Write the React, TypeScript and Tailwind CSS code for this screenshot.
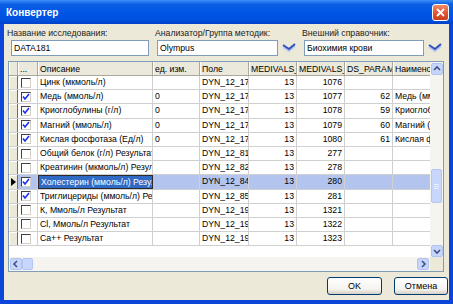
import React from "react";

type Row = {
  checked: boolean;
  desc: string;
  unit: string;
  field: string;
  m1: string;
  m2: string;
  ds: string;
  name: string;
  selected?: boolean;
};

const rows: Row[] = [
  { checked: false, desc: "Цинк (мкмоль/л)", unit: "", field: "DYN_12_177", m1: "13", m2: "1076", ds: "", name: "" },
  { checked: true, desc: "Медь (ммоль/л)", unit: "0", field: "DYN_12_177", m1: "13", m2: "1077", ds: "62", name: "Медь (ммоль/л)" },
  { checked: true, desc: "Криоглобулины (г/л)", unit: "0", field: "DYN_12_177", m1: "13", m2: "1078", ds: "59", name: "Криоглобулины" },
  { checked: true, desc: "Магний (ммоль/л)", unit: "0", field: "DYN_12_177", m1: "13", m2: "1079", ds: "60", name: "Магний (ммоль/л)" },
  { checked: true, desc: "Кислая фосфотаза (Ед/л)", unit: "0", field: "DYN_12_177", m1: "13", m2: "1080", ds: "61", name: "Кислая фосфотаза" },
  { checked: false, desc: "Общий белок (г/л) Результат", unit: "", field: "DYN_12_81", m1: "13", m2: "277", ds: "", name: "" },
  { checked: false, desc: "Креатинин (мкмоль/л) Результат", unit: "", field: "DYN_12_82", m1: "13", m2: "278", ds: "", name: "" },
  { checked: true, desc: "Холестерин (ммоль/л) Результат", unit: "", field: "DYN_12_84", m1: "13", m2: "280", ds: "", name: "", selected: true },
  { checked: true, desc: "Триглицериды (ммоль/л) Результат", unit: "", field: "DYN_12_85", m1: "13", m2: "281", ds: "", name: "" },
  { checked: false, desc: "К, Ммоль/л Результат", unit: "", field: "DYN_12_199", m1: "13", m2: "1321", ds: "", name: "" },
  { checked: false, desc: "Cl, Ммоль/л Результат", unit: "", field: "DYN_12_199", m1: "13", m2: "1322", ds: "", name: "" },
  { checked: false, desc: "Ca++ Результат", unit: "", field: "DYN_12_199", m1: "13", m2: "1323", ds: "", name: "" },
];

const DropIcon = () => (
  <svg width="14" height="10" viewBox="0 0 14 10" className="shrink-0">
    <polyline points="1,4 7,8 13,3" fill="none" stroke="#b8c8f0" strokeWidth="2" />
    <polyline points="1,2 7,6 13,1" fill="none" stroke="#2f52c0" strokeWidth="2" />
  </svg>
);

const CheckBox = ({ checked }: { checked: boolean }) => (
  <div className="w-[10px] h-[10px] bg-white border-t border-l border-[#404040] border-b border-r border-b-[#d4d0c8] border-r-[#d4d0c8] flex items-center justify-center">
    {checked && (
      <svg width="8" height="8" viewBox="0 0 8 8">
        <polyline points="1,3.5 3,6 7,1" fill="none" stroke="#1c2ff0" strokeWidth="1.6" />
      </svg>
    )}
  </div>
);

const Arrow = ({ dir }: { dir: "up" | "down" | "left" | "right" }) => {
  const pts = {
    up: "2,6 5,3 8,6",
    down: "2,4 5,7 8,4",
    left: "6,2 3,5 6,8",
    right: "4,2 7,5 4,8",
  }[dir];
  return (
    <div className="w-[12px] h-[12px] rounded-[2px] bg-[#c6d5fa] border border-[#b0c4f2] flex items-center justify-center">
      <svg width="10" height="10" viewBox="0 0 10 10">
        <polyline points={pts} fill="none" stroke="#3d5285" strokeWidth="1.6" />
      </svg>
    </div>
  );
};

const HeadCell = ({ w, children }: { w: string; children?: React.ReactNode }) => (
  <div className={`${w} shrink-0 h-full px-[2px] bg-[#ebe9db] border-r border-[#aca899] shadow-[inset_1px_0_0_#fff] overflow-hidden whitespace-nowrap leading-[14px]`}>
    {children}
  </div>
);

const Cell = ({ w, right, children, sel }: { w: string; right?: boolean; children?: React.ReactNode; sel?: boolean }) => (
  <div
    className={`${w} shrink-0 h-full px-[2px] border-r border-[#d0d0d0] overflow-hidden whitespace-nowrap leading-[13px] ${right ? "text-right" : ""} ${sel ? "bg-[#b3c5ef]" : ""}`}
  >
    {children}
  </div>
);

export default function App() {
  return (
    <div className="w-[453px] h-[304px] bg-[#0b45d9] flex flex-col font-['Liberation_Sans',Arial,sans-serif] text-[8.7px] text-black">
      {/* title bar */}
      <div className="h-[24px] shrink-0 flex items-center justify-between pl-[6px] pr-[4px] bg-[linear-gradient(to_bottom,#3d8ff8_0%,#0a5ee2_18%,#0055e5_55%,#0050dc_85%,#0040c6_100%)]">
        <span className="font-bold text-[10px] text-white">Конвертер</span>
        <div className="w-[17px] h-[17px] rounded-[3px] border border-white bg-[linear-gradient(to_bottom,#f08a66,#e0502c_60%,#c8401e)] flex items-center justify-center">
          <svg width="9" height="9" viewBox="0 0 9 9">
            <path d="M1 1 L8 8 M8 1 L1 8" stroke="#fff" strokeWidth="1.8" />
          </svg>
        </div>
      </div>

      {/* body */}
      <div className="flex-1 mx-[4px] mb-[4px] bg-[#ece9d8] flex flex-col">
        <div className="flex pt-[3px] pl-[3px]">
          <div className="w-[148px] flex flex-col">
            <span className="leading-[13px] text-[#222]">Название исследования:</span>
            <div className="ml-[4px] w-[138px] h-[16px] bg-white border border-[#7f9db9] px-[2px] leading-[14px]">DATA181</div>
          </div>
          <div className="w-[147px] flex flex-col">
            <span className="leading-[13px] text-[#222]">Анализатор/Группа методик:</span>
            <div className="flex items-center">
              <div className="ml-[2px] w-[121px] h-[16px] bg-white border border-[#7f9db9] px-[2px] leading-[14px]">Olympus</div>
              <div className="ml-[4px]">
                <DropIcon />
              </div>
            </div>
          </div>
          <div className="flex flex-col">
            <span className="leading-[13px] text-[#222]">Внешний справочник:</span>
            <div className="flex items-center">
              <div className="ml-[2px] w-[120px] h-[16px] bg-white border border-[#7f9db9] px-[2px] leading-[14px]">Биохимия крови</div>
              <div className="ml-[4px]">
                <DropIcon />
              </div>
            </div>
          </div>
        </div>

        {/* grid */}
        <div className="mt-[5px] ml-[4px] w-[436px] h-[211px] border border-[#7f9db9] bg-white flex flex-col">
          <div className="h-[195px] flex">
            <div className="w-[421px] overflow-hidden flex flex-col">
              <div className="h-[14px] flex border-b border-[#aca899] shrink-0">
                <HeadCell w="w-[9px]" />
                <HeadCell w="w-[20px]">...</HeadCell>
                <HeadCell w="w-[115px]">Описание</HeadCell>
                <HeadCell w="w-[47px]">ед. изм.</HeadCell>
                <HeadCell w="w-[49px]">Поле</HeadCell>
                <HeadCell w="w-[48px]">MEDIVALS_ID</HeadCell>
                <HeadCell w="w-[48px]">MEDIVALS_PARAM</HeadCell>
                <HeadCell w="w-[48px]">DS_PARAMS_ID</HeadCell>
                <HeadCell w="w-[60px]">Наименование</HeadCell>
              </div>
              {rows.map((r, i) => (
                <div key={i} className="h-[14.2px] flex border-b border-[#d0d0d0] shrink-0">
                  <div className="w-[9px] shrink-0 h-full bg-[#ece9d8] border-r border-[#716f64] shadow-[inset_1px_1px_0_#fff] flex items-center justify-center">
                    {r.selected && (
                      <svg width="5" height="8" viewBox="0 0 5 8">
                        <path d="M0 0 L5 4 L0 8 Z" fill="#000" />
                      </svg>
                    )}
                  </div>
                  <div className={`w-[20px] shrink-0 h-full border-r border-[#d0d0d0] flex items-center pl-[3px] ${r.selected ? "bg-[#b3c5ef]" : ""}`}>
                    <CheckBox checked={r.checked} />
                  </div>
                  <div
                    className={`w-[115px] shrink-0 h-full px-[2px] overflow-hidden whitespace-nowrap leading-[13px] ${
                      r.selected ? "bg-[#316ac5] text-white border border-[#2a2a2a]" : "border-r border-[#d0d0d0]"
                    }`}
                  >
                    {r.desc}
                  </div>
                  <Cell w="w-[47px]" sel={r.selected}>{r.unit}</Cell>
                  <Cell w="w-[49px]" sel={r.selected}>{r.field}</Cell>
                  <Cell w="w-[48px]" right sel={r.selected}>{r.m1}</Cell>
                  <Cell w="w-[48px]" right sel={r.selected}>{r.m2}</Cell>
                  <Cell w="w-[48px]" right sel={r.selected}>{r.ds}</Cell>
                  <Cell w="w-[60px]" sel={r.selected}>{r.name}</Cell>
                </div>
              ))}
            </div>
            {/* vertical scrollbar */}
            <div className="w-[13px] h-full bg-[#f5f4ef] flex flex-col items-center pt-[1px]">
              <Arrow dir="up" />
              <div className="flex-1 w-full flex flex-col items-center">
                <div className="mt-[94px] w-[11px] h-[34px] rounded-[2px] bg-[#c8d6fb] border border-[#b2c5f3] flex flex-col items-center justify-center gap-[1px]">
                  <div className="w-[5px] h-[1px] bg-[#e8eefd]" />
                  <div className="w-[5px] h-[1px] bg-[#e8eefd]" />
                  <div className="w-[5px] h-[1px] bg-[#e8eefd]" />
                </div>
              </div>
              <Arrow dir="down" />
            </div>
          </div>
          {/* horizontal scrollbar */}
          <div className="h-[14px] flex">
            <div className="w-[421px] h-full bg-[#f5f4ef] flex items-center pl-[1px] pr-[1px]">
              <Arrow dir="left" />
              <div className="flex-1 h-full flex items-center">
                <div className="w-[11px] h-[12px] rounded-[2px] bg-[#c8d6fb] border border-[#b2c5f3]" />
              </div>
              <Arrow dir="right" />
            </div>
            <div className="w-[13px] h-full bg-[#ece9d8]" />
          </div>
        </div>

        {/* buttons */}
        <div className="mt-[5px] flex justify-end pr-[1px] gap-[12px]">
          <button className="w-[55px] h-[18px] rounded-[3px] border border-[#003c74] bg-[linear-gradient(to_bottom,#ffffff,#f4f3ee_70%,#d6d0c5)] text-[9px] leading-[16px]">
            OK
          </button>
          <button className="w-[54px] h-[18px] rounded-[3px] border border-[#003c74] bg-[linear-gradient(to_bottom,#ffffff,#f4f3ee_70%,#d6d0c5)] text-[9px] leading-[16px]">
            Отмена
          </button>
        </div>
      </div>
    </div>
  );
}
